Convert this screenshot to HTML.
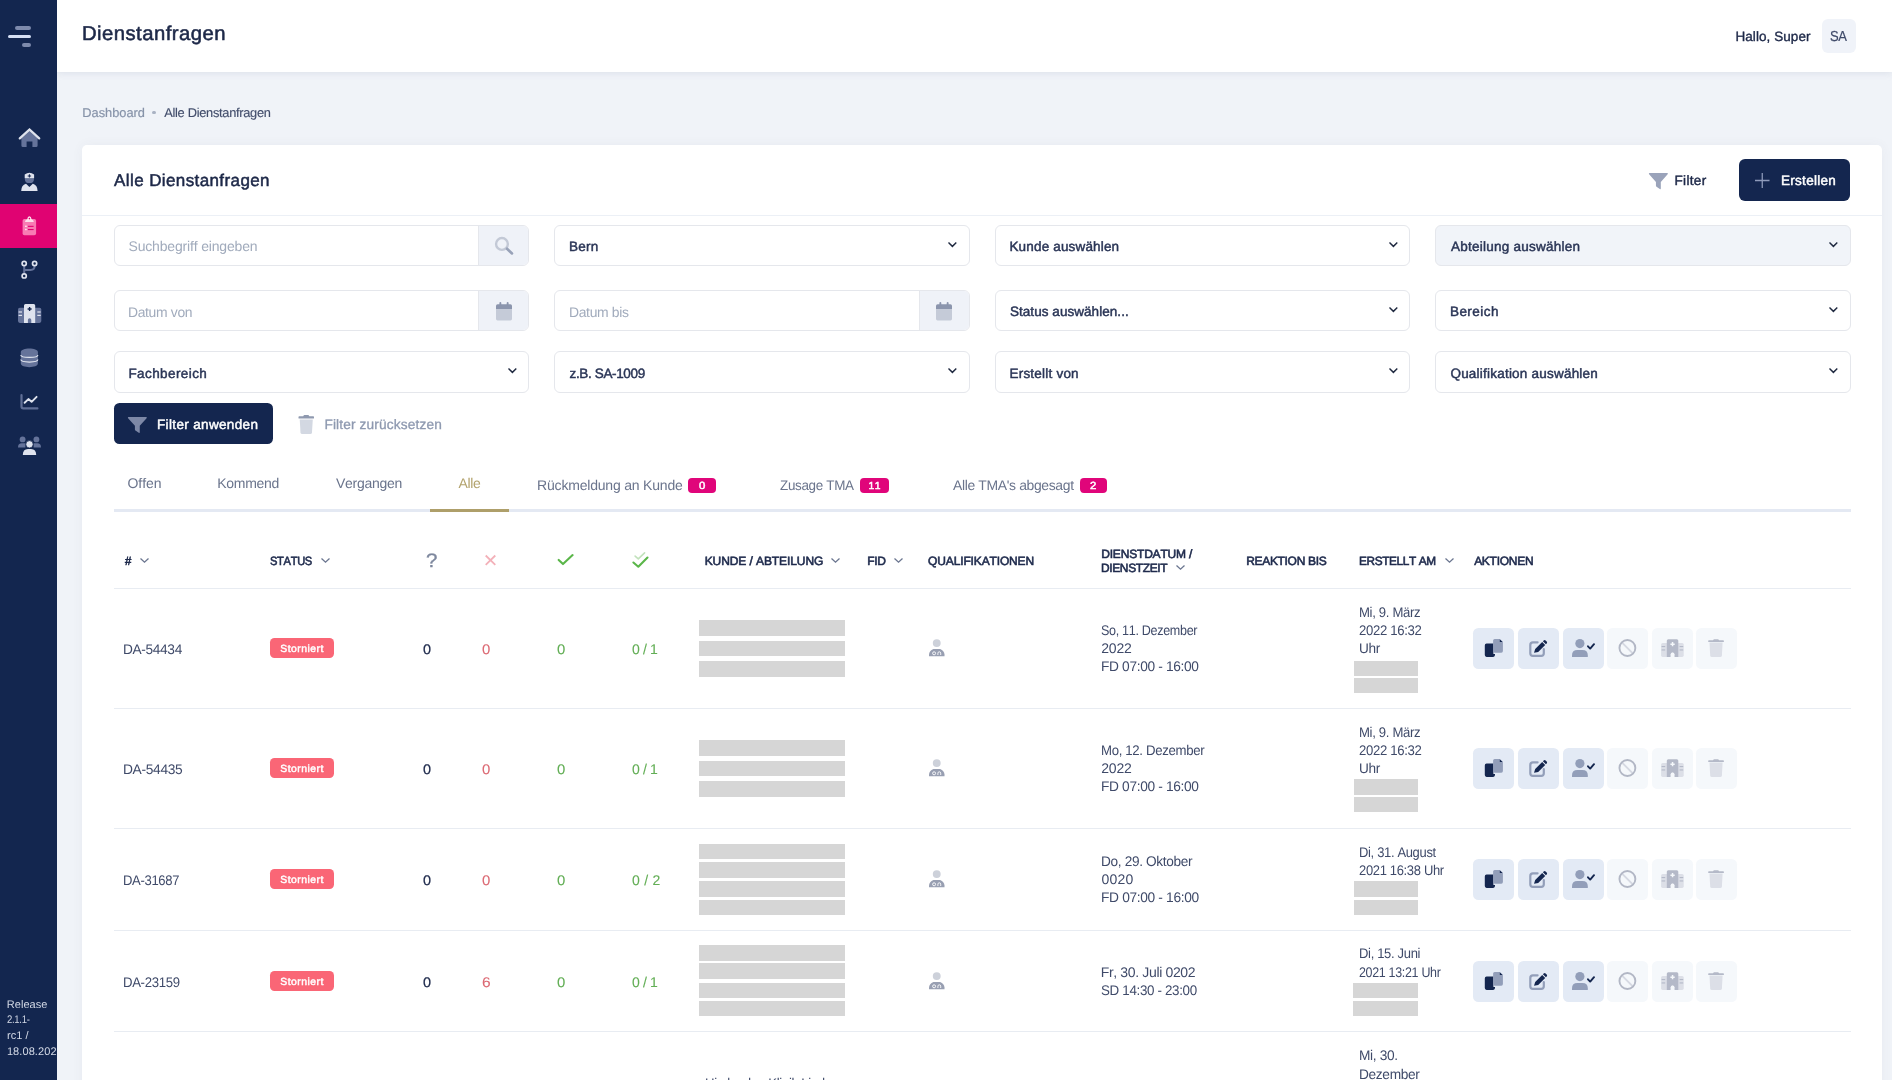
<!DOCTYPE html>
<html lang="de">
<head>
<meta charset="utf-8">
<title>Dienstanfragen</title>
<style>
*{box-sizing:border-box;margin:0;padding:0}
html,body{width:1892px;height:1080px;overflow:hidden}
body{position:relative;background:#f0f3f8;font-family:"Liberation Sans",sans-serif;color:#222c4e;font-size:14px;font-kerning:none}
.abs,.t{position:absolute}
.t{white-space:nowrap;line-height:20px;height:20px;transform-origin:0 50%;text-rendering:geometricPrecision}
#side,#head,#crumbs,#card{will-change:transform}
svg{display:block;overflow:visible}
#side{position:absolute;z-index:3;left:0;top:0;width:57px;height:1080px;background:#13264f;overflow:hidden}
#head{position:absolute;left:57px;top:0;width:1835px;height:72px;background:#fff;box-shadow:0 2px 6px rgba(190,197,212,.32)}
#card{position:absolute;left:82px;top:145px;width:1800px;height:960px;background:#fff;border-radius:5px 5px 0 0;box-shadow:0 0 12px rgba(70,76,100,.05)}
</style>
</head>
<body>
<nav id="side">
<div class="abs" style="left:14.90px;top:26.40px;width:16.30px;height:3.70px;background:#7d8aac;border-radius:2px;"></div>
<div class="abs" style="left:7.80px;top:34.80px;width:23.40px;height:3.60px;background:#d6e0f5;border-radius:2px;"></div>
<div class="abs" style="left:21.80px;top:42.90px;width:9.40px;height:3.80px;background:#7d8aac;border-radius:2px;"></div>
<svg class="abs" style="left:18.00px;top:127.00px;" width="23.00" height="21.00" viewBox="18 127 23 21" preserveAspectRatio="none"><path d="M21.4 138.2 L29.5 131.2 L37.6 138.2 V145.4 Q37.6 146.9 36.1 146.9 H32.4 V141.6 H26.6 V146.9 H22.9 Q21.4 146.9 21.4 145.4 Z" fill="#65739a"/><path d="M19.8 138.4 L29.5 129.6 L39.2 138.4" fill="none" stroke="#dfe3ee" stroke-width="2.3" stroke-linecap="round" stroke-linejoin="miter"/></svg>
<svg class="abs" style="left:20.00px;top:171.00px;" width="19.00" height="21.00" viewBox="20 171 19 21" preserveAspectRatio="none"><path d="M24.9 178.2 H33.9 V179.4 Q33.9 183 29.4 183 Q24.9 183 24.9 179.4 Z" fill="#65739a"/><path d="M24.7 178.3 V174.4 Q29.4 171.3 34.1 174.4 V178.3 Z" fill="#dfe3ee"/><path d="M28.9 175.4 V174.2 H29.9 V175.4 H31.1 V176.4 H29.9 V177.6 H28.9 V176.4 H27.7 V175.4 Z" fill="#14264f"/><path d="M21.2 191.1 Q21.2 185.2 26 183.8 L29.4 187 L32.8 183.8 Q37.6 185.2 37.6 191.1 Z" fill="#dfe3ee"/></svg>
<div class="abs" style="left:0.00px;top:204.00px;width:57.00px;height:44.00px;background:#e00372;"></div>
<svg class="abs" style="left:21.00px;top:215.00px;" width="17.00" height="22.00" viewBox="21 215 17 22" preserveAspectRatio="none"><rect x="22.6" y="219" width="13.5" height="16.2" rx="1.8" fill="#f87bb3"/><path d="M25 222 Q25 219.6 27.2 219.2 Q27.6 216.3 29.4 216.3 Q31.2 216.3 31.6 219.2 Q33.8 219.6 33.8 222 Z" fill="#fde0ec"/><circle cx="29.4" cy="218.6" r="0.8" fill="#e00372"/><rect x="25" y="225.6" width="1.8" height="1.4" fill="#fde0ec"/><rect x="28" y="225.8" width="5.6" height="1.1" fill="#e00372"/><rect x="25" y="228.8" width="1.8" height="1.4" fill="#fde0ec"/><rect x="28" y="229" width="5.6" height="1.1" fill="#e00372"/></svg>
<svg class="abs" style="left:20.00px;top:259.00px;" width="19.00" height="21.00" viewBox="20 259 19 21" preserveAspectRatio="none"><path d="M24.2 266 V273.4 M24.2 269.9 H30.6 Q34.6 269.9 34.6 266" fill="none" stroke="#65739a" stroke-width="2"/><circle cx="24.2" cy="263.5" r="2.1" fill="#14264f" stroke="#dfe3ee" stroke-width="1.7"/><circle cx="34.6" cy="263.5" r="2.1" fill="#14264f" stroke="#dfe3ee" stroke-width="1.7"/><circle cx="24.2" cy="275.9" r="2.1" fill="#14264f" stroke="#dfe3ee" stroke-width="1.7"/></svg>
<svg class="abs" style="left:18.00px;top:303.00px;" width="24.00" height="21.00" viewBox="18 303 24 21" preserveAspectRatio="none"><g opacity="1"><path d="M18 309.6 Q18 307.8 19.8 307.8 H39.5 Q41.3 307.8 41.3 309.6 V321.1 Q41.3 322.9 39.5 322.9 H19.8 Q18 322.9 18 321.1 Z" fill="#65739a"/><rect x="18.6" y="311.4" width="3.4" height="1.2" fill="#dfe3ee"/><rect x="18.6" y="314.8" width="3.4" height="1.2" fill="#dfe3ee"/><rect x="37.3" y="311.4" width="3.4" height="1.2" fill="#dfe3ee"/><rect x="37.3" y="314.8" width="3.4" height="1.2" fill="#dfe3ee"/><path d="M24 305.6 Q24 304.1 25.5 304.1 H33.7 Q35.2 304.1 35.2 305.6 V322.9 H31.3 V319.9 Q31.3 318.3 29.6 318.3 Q27.9 318.3 27.9 319.9 V322.9 H24 Z" fill="#dfe3ee"/><path d="M28.9 307 H30.3 V308.3 H31.6 V309.7 H30.3 V311 H28.9 V309.7 H27.6 V308.3 H28.9 Z" fill="#14264f"/></g></svg>
<svg class="abs" style="left:20.00px;top:347.00px;" width="19.00" height="21.00" viewBox="20 347 19 21" preserveAspectRatio="none"><path d="M20.8 351.9 V363.6 C20.8 368.3 37.9 368.3 37.9 363.6 V351.9 C37.9 347.2 20.8 347.2 20.8 351.9 Z" fill="#65739a"/><path d="M20.8 354.9 C20.8 358.2 37.9 358.2 37.9 354.9 M20.8 359.6 C20.8 362.9 37.9 362.9 37.9 359.6" fill="none" stroke="#dfe3ee" stroke-width="1.1"/></svg>
<svg class="abs" style="left:19.00px;top:393.00px;" width="21.00" height="18.00" viewBox="19 393 21 18" preserveAspectRatio="none"><path d="M21.5 395 V406.6 Q21.5 408.4 23.3 408.4 H37.4" fill="none" stroke="#5f6e96" stroke-width="2.2" stroke-linecap="round"/><path d="M24.6 402.8 L28.4 399.1 L31.6 401.8 L36.6 396.8" fill="none" stroke="#dfe3ee" stroke-width="1.9" stroke-linecap="round" stroke-linejoin="round"/></svg>
<svg class="abs" style="left:17.00px;top:435.00px;" width="25.00" height="21.00" viewBox="17 435 25 21" preserveAspectRatio="none"><circle cx="22.6" cy="439.4" r="2.9" fill="#65739a"/><circle cx="36.4" cy="439.4" r="2.9" fill="#65739a"/><path d="M18 447.4 Q18 443.3 21.8 443.3 H25.4 V447.4 Z" fill="#65739a"/><path d="M41 447.4 Q41 443.3 37.2 443.3 H33.6 V447.4 Z" fill="#65739a"/><circle cx="29.5" cy="444.3" r="3.7" fill="#dfe3ee" stroke="#14264f" stroke-width="0.8"/><path d="M22.8 455 Q22.8 449 28 449 H31 Q36.2 449 36.2 455 Z" fill="#dfe3ee"/></svg>
<div class="t" style="left:6.82px;top:995px;font-size:11px;color:#d3d9e6;letter-spacing:0.029px;">Release</div>
<div class="t" style="left:7.22px;top:1010px;font-size:11px;color:#d3d9e6;letter-spacing:-0.350px;transform:scaleX(0.8677);">2.1.1-</div>
<div class="t" style="left:6.99px;top:1026px;font-size:11px;color:#d3d9e6;letter-spacing:0.074px;">rc1 /</div>
<div class="t" style="left:6.88px;top:1042px;font-size:11px;color:#d3d9e6;letter-spacing:0.086px;">18.08.2022</div>
</nav>
<header id="head">
<div class="t" style="left:24.90px;top:22px;font-size:20px;color:#1d2848;letter-spacing:0.450px;transform:scaleX(1.0136);-webkit-text-stroke:0.55px #1d2848;line-height:24px;height:24px;">Dienstanfragen</div>
<div class="t" style="left:1678.46px;top:27px;font-size:13.5px;color:#1d2848;letter-spacing:0.066px;-webkit-text-stroke:0.36px #1d2848;">Hallo, Super</div>
<div class="abs" style="left:1764.80px;top:18.80px;width:34.40px;height:34.20px;background:#f0f3f9;border-radius:6px;"></div>
<div class="t" style="left:1773.39px;top:27px;font-size:14.5px;color:#3f4a69;letter-spacing:-0.350px;transform:scaleX(0.8978);-webkit-text-stroke:0.2px #3f4a69;">SA</div>
</header>
<div id="crumbs">
<div class="t" style="left:82.36px;top:103px;font-size:12.8px;color:#8793a9;letter-spacing:-0.009px;-webkit-text-stroke:0.2px #8793a9;">Dashboard</div>
<div class="abs" style="left:152.00px;top:110.75px;width:3.50px;height:3.50px;background:#a9b2c3;border-radius:2px;"></div>
<div class="t" style="left:164.21px;top:103px;font-size:12.8px;color:#434e6c;letter-spacing:-0.278px;-webkit-text-stroke:0.15px #434e6c;">Alle Dienstanfragen</div>
</div>
<main id="card">
<div class="t" style="left:32.10px;top:26px;font-size:17px;color:#1d2848;letter-spacing:0.393px;-webkit-text-stroke:0.5px #1d2848;">Alle Dienstanfragen</div>
<div class="abs" style="left:0.00px;top:69.50px;width:1800.00px;height:1.50px;background:#ecf0f6;"></div>
<svg class="abs" style="left:1567.00px;top:27.50px;" width="18.75" height="16.25" viewBox="0 0 20 17" preserveAspectRatio="none"><path d="M0.4 0 H19.6 Q20.6 0.3 19.9 1.2 L12.6 9.4 V16.2 Q12.5 17.3 11.5 16.7 L8 14.4 Q7.4 14 7.4 13.2 V9.4 L0.1 1.2 Q-0.6 0.3 0.4 0 Z" fill="#9aa3ba"/></svg>
<div class="t" style="left:1592.50px;top:26px;font-size:13.5px;color:#1d2848;letter-spacing:0.338px;-webkit-text-stroke:0.46px #1d2848;">Filter</div>
<div class="abs" style="left:1657.40px;top:14.00px;width:111.10px;height:41.50px;background:#14264f;border-radius:6px;"></div>
<svg class="abs" style="left:1673.00px;top:28.00px;" width="14.50" height="15.00" viewBox="0 0 15 15" preserveAspectRatio="none"><path d="M7.5 0 V15 M0 7.5 H15" stroke="#8f9bbb" stroke-width="1.3" fill="none"/></svg>
<div class="t" style="left:1699.00px;top:26px;font-size:13.5px;color:#fff;letter-spacing:0.289px;-webkit-text-stroke:0.46px #fff;">Erstellen</div>
<div class="abs fld" style="left:31.75px;top:80.30px;width:415.25px;height:41.00px;background:#fff;border-radius:6px;border:1px solid #e5e7ec;"></div>
<div class="t" style="left:46.52px;top:91px;font-size:14px;color:#a1abbc;letter-spacing:-0.173px;">Suchbegriff eingeben</div>
<div class="abs" style="left:396.00px;top:81.30px;width:50.00px;height:39.00px;background:#eff2f8;border-left:1px solid #e5e7ec;border-radius:0 5px 5px 0;"></div>
<svg class="abs" style="left:412.50px;top:92.00px;" width="18.50" height="17.50" viewBox="0 0 18.5 17.5" preserveAspectRatio="none"><circle cx="6.95" cy="6.95" r="5.9" fill="none" stroke="#c3c9d6" stroke-width="2.4"/><path d="M12 11.8 L17 16.4" stroke="#98a2b8" stroke-width="2.7" stroke-linecap="round"/></svg>
<div class="abs fld" style="left:472.25px;top:80.30px;width:415.25px;height:41.00px;background:#fff;border-radius:6px;border:1px solid #e5e7ec;"></div>
<div class="t" style="left:486.95px;top:92px;font-size:13.5px;color:#2a3556;letter-spacing:0.290px;-webkit-text-stroke:0.46px #2a3556;">Bern</div>
<svg class="abs" style="left:866.20px;top:96.90px;" width="8.80" height="5.20" viewBox="0 0 9 5" preserveAspectRatio="none"><path d="M0.5 0.5 L4.5 4.2 L8.5 0.5" stroke="#1f2940" stroke-width="1.45" fill="none" stroke-linecap="butt" stroke-linejoin="miter"/></svg>
<div class="abs fld" style="left:912.75px;top:80.30px;width:415.25px;height:41.00px;background:#fff;border-radius:6px;border:1px solid #e5e7ec;"></div>
<div class="t" style="left:927.45px;top:92px;font-size:13.5px;color:#2a3556;letter-spacing:0.168px;-webkit-text-stroke:0.46px #2a3556;">Kunde auswählen</div>
<svg class="abs" style="left:1306.70px;top:96.90px;" width="8.80" height="5.20" viewBox="0 0 9 5" preserveAspectRatio="none"><path d="M0.5 0.5 L4.5 4.2 L8.5 0.5" stroke="#1f2940" stroke-width="1.45" fill="none" stroke-linecap="butt" stroke-linejoin="miter"/></svg>
<div class="abs fld" style="left:1353.25px;top:80.30px;width:415.25px;height:41.00px;background:#f1f4f9;border-radius:6px;border:1px solid #e5e7ec;"></div>
<div class="t" style="left:1369.03px;top:92px;font-size:13.5px;color:#2a3556;letter-spacing:0.248px;-webkit-text-stroke:0.46px #2a3556;">Abteilung auswählen</div>
<svg class="abs" style="left:1747.20px;top:96.90px;" width="8.80" height="5.20" viewBox="0 0 9 5" preserveAspectRatio="none"><path d="M0.5 0.5 L4.5 4.2 L8.5 0.5" stroke="#1f2940" stroke-width="1.45" fill="none" stroke-linecap="butt" stroke-linejoin="miter"/></svg>
<div class="abs fld" style="left:31.75px;top:145.30px;width:415.25px;height:41.00px;background:#fff;border-radius:6px;border:1px solid #e5e7ec;"></div>
<div class="t" style="left:46.04px;top:157px;font-size:14px;color:#a1abbc;letter-spacing:-0.350px;transform:scaleX(0.9941);">Datum von</div>
<div class="abs" style="left:396.00px;top:146.30px;width:50.00px;height:39.00px;background:#eff2f8;border-left:1px solid #e5e7ec;border-radius:0 5px 5px 0;"></div>
<svg class="abs" style="left:413.50px;top:156.50px;" width="16.00" height="18.50" viewBox="0 0 16 18.5" preserveAspectRatio="none"><rect x="0" y="5.4" width="16" height="13" rx="1.6" fill="#c5cbd8"/><path d="M0 7 V3.8 Q0 2.2 1.6 2.2 H14.4 Q16 2.2 16 3.8 V7 Z" fill="#8b95ad"/><rect x="3.4" y="0" width="1.9" height="4" rx="0.9" fill="#8b95ad"/><rect x="10.7" y="0" width="1.9" height="4" rx="0.9" fill="#8b95ad"/></svg>
<div class="abs fld" style="left:472.25px;top:145.30px;width:415.25px;height:41.00px;background:#fff;border-radius:6px;border:1px solid #e5e7ec;"></div>
<div class="t" style="left:486.54px;top:157px;font-size:14px;color:#a1abbc;letter-spacing:-0.350px;transform:scaleX(0.9947);">Datum bis</div>
<div class="abs" style="left:836.50px;top:146.30px;width:50.00px;height:39.00px;background:#eff2f8;border-left:1px solid #e5e7ec;border-radius:0 5px 5px 0;"></div>
<svg class="abs" style="left:854.00px;top:156.50px;" width="16.00" height="18.50" viewBox="0 0 16 18.5" preserveAspectRatio="none"><rect x="0" y="5.4" width="16" height="13" rx="1.6" fill="#c5cbd8"/><path d="M0 7 V3.8 Q0 2.2 1.6 2.2 H14.4 Q16 2.2 16 3.8 V7 Z" fill="#8b95ad"/><rect x="3.4" y="0" width="1.9" height="4" rx="0.9" fill="#8b95ad"/><rect x="10.7" y="0" width="1.9" height="4" rx="0.9" fill="#8b95ad"/></svg>
<div class="abs fld" style="left:912.75px;top:145.30px;width:415.25px;height:41.00px;background:#fff;border-radius:6px;border:1px solid #e5e7ec;"></div>
<div class="t" style="left:927.93px;top:157px;font-size:13.5px;color:#2a3556;letter-spacing:0.053px;-webkit-text-stroke:0.46px #2a3556;">Status auswählen...</div>
<svg class="abs" style="left:1306.70px;top:161.90px;" width="8.80" height="5.20" viewBox="0 0 9 5" preserveAspectRatio="none"><path d="M0.5 0.5 L4.5 4.2 L8.5 0.5" stroke="#1f2940" stroke-width="1.45" fill="none" stroke-linecap="butt" stroke-linejoin="miter"/></svg>
<div class="abs fld" style="left:1353.25px;top:145.30px;width:415.25px;height:41.00px;background:#fff;border-radius:6px;border:1px solid #e5e7ec;"></div>
<div class="t" style="left:1367.95px;top:157px;font-size:13.5px;color:#2a3556;letter-spacing:0.450px;-webkit-text-stroke:0.46px #2a3556;">Bereich</div>
<svg class="abs" style="left:1747.20px;top:161.90px;" width="8.80" height="5.20" viewBox="0 0 9 5" preserveAspectRatio="none"><path d="M0.5 0.5 L4.5 4.2 L8.5 0.5" stroke="#1f2940" stroke-width="1.45" fill="none" stroke-linecap="butt" stroke-linejoin="miter"/></svg>
<div class="abs fld" style="left:31.75px;top:206.20px;width:415.25px;height:41.70px;background:#fff;border-radius:6px;border:1px solid #e5e7ec;"></div>
<div class="t" style="left:46.45px;top:219px;font-size:13.5px;color:#2a3556;letter-spacing:0.410px;-webkit-text-stroke:0.46px #2a3556;">Fachbereich</div>
<svg class="abs" style="left:425.70px;top:222.80px;" width="8.80" height="5.20" viewBox="0 0 9 5" preserveAspectRatio="none"><path d="M0.5 0.5 L4.5 4.2 L8.5 0.5" stroke="#1f2940" stroke-width="1.45" fill="none" stroke-linecap="butt" stroke-linejoin="miter"/></svg>
<div class="abs fld" style="left:472.25px;top:206.20px;width:415.25px;height:41.70px;background:#fff;border-radius:6px;border:1px solid #e5e7ec;"></div>
<div class="t" style="left:487.49px;top:219px;font-size:13.5px;color:#2a3556;letter-spacing:-0.350px;-webkit-text-stroke:0.46px #2a3556;">z.B. SA-1009</div>
<svg class="abs" style="left:866.20px;top:222.80px;" width="8.80" height="5.20" viewBox="0 0 9 5" preserveAspectRatio="none"><path d="M0.5 0.5 L4.5 4.2 L8.5 0.5" stroke="#1f2940" stroke-width="1.45" fill="none" stroke-linecap="butt" stroke-linejoin="miter"/></svg>
<div class="abs fld" style="left:912.75px;top:206.20px;width:415.25px;height:41.70px;background:#fff;border-radius:6px;border:1px solid #e5e7ec;"></div>
<div class="t" style="left:927.45px;top:219px;font-size:13.5px;color:#2a3556;letter-spacing:0.219px;-webkit-text-stroke:0.46px #2a3556;">Erstellt von</div>
<svg class="abs" style="left:1306.70px;top:222.80px;" width="8.80" height="5.20" viewBox="0 0 9 5" preserveAspectRatio="none"><path d="M0.5 0.5 L4.5 4.2 L8.5 0.5" stroke="#1f2940" stroke-width="1.45" fill="none" stroke-linecap="butt" stroke-linejoin="miter"/></svg>
<div class="abs fld" style="left:1353.25px;top:206.20px;width:415.25px;height:41.70px;background:#fff;border-radius:6px;border:1px solid #e5e7ec;"></div>
<div class="t" style="left:1368.43px;top:219px;font-size:13.5px;color:#2a3556;letter-spacing:0.219px;-webkit-text-stroke:0.46px #2a3556;">Qualifikation auswählen</div>
<svg class="abs" style="left:1747.20px;top:222.80px;" width="8.80" height="5.20" viewBox="0 0 9 5" preserveAspectRatio="none"><path d="M0.5 0.5 L4.5 4.2 L8.5 0.5" stroke="#1f2940" stroke-width="1.45" fill="none" stroke-linecap="butt" stroke-linejoin="miter"/></svg>
<div class="abs" style="left:31.75px;top:258.00px;width:159.00px;height:40.75px;background:#14264f;border-radius:5.5px;"></div>
<svg class="abs" style="left:46.30px;top:271.70px;" width="18.70" height="16.00" viewBox="0 0 20 17" preserveAspectRatio="none"><path d="M0.4 0 H19.6 Q20.6 0.3 19.9 1.2 L12.6 9.4 V16.2 Q12.5 17.3 11.5 16.7 L8 14.4 Q7.4 14 7.4 13.2 V9.4 L0.1 1.2 Q-0.6 0.3 0.4 0 Z" fill="#7d88a7"/></svg>
<div class="t" style="left:75.00px;top:270px;font-size:13.5px;color:#fff;letter-spacing:0.348px;-webkit-text-stroke:0.46px #fff;">Filter anwenden</div>
<svg class="abs" style="left:215.50px;top:270.00px;" width="16.50" height="19.00" viewBox="0 0 16.5 19" preserveAspectRatio="none"><path d="M0.5 1.9 Q0.5 1.3 1.2 1.3 H5.2 L5.8 0.3 Q6 0 6.4 0 H10.1 Q10.5 0 10.7 0.3 L11.3 1.3 H15.3 Q16 1.3 16 1.9 V2.9 Q16 3.4 15.4 3.4 H1.1 Q0.5 3.4 0.5 2.9 Z" fill="#8f99af"/><path d="M1.7 4.4 H14.8 L14 17.4 Q13.9 19 12.3 19 H4.2 Q2.6 19 2.5 17.4 Z" fill="#d3d8e2"/></svg>
<div class="t" style="left:242.42px;top:270px;font-size:13.7px;color:#8e99b0;letter-spacing:0.140px;-webkit-text-stroke:0.3px #8e99b0;">Filter zurücksetzen</div>
<div class="t" style="left:45.52px;top:328px;font-size:14px;color:#6a748c;letter-spacing:-0.051px;">Offen</div>
<div class="t" style="left:135.28px;top:328px;font-size:14px;color:#6a748c;letter-spacing:-0.297px;">Kommend</div>
<div class="t" style="left:253.90px;top:328px;font-size:14px;color:#6a748c;letter-spacing:-0.262px;">Vergangen</div>
<div class="t" style="left:376.40px;top:328px;font-size:14px;color:#b3a36d;letter-spacing:-0.323px;">Alle</div>
<div class="t" style="left:455.08px;top:330px;font-size:14px;color:#6a748c;letter-spacing:-0.197px;">Rückmeldung an Kunde</div>
<div class="abs" style="left:606.45px;top:332.50px;width:27.35px;height:15.80px;background:#e0057a;border-radius:4px;"></div>
<div class="t" style="left:617.08px;top:332px;font-size:10.3px;color:#fff;transform:scaleX(1.1001);-webkit-text-stroke:0.5px #fff;">0</div>
<div class="t" style="left:697.50px;top:330px;font-size:14px;color:#6a748c;letter-spacing:-0.350px;transform:scaleX(0.9609);">Zusage TMA</div>
<div class="abs" style="left:778.20px;top:332.50px;width:28.60px;height:15.80px;background:#e0057a;border-radius:4px;"></div>
<div class="t" style="left:786.47px;top:332px;font-size:10.3px;color:#fff;letter-spacing:0.500px;-webkit-text-stroke:0.5px #fff;">11</div>
<div class="t" style="left:870.70px;top:330px;font-size:14px;color:#6a748c;letter-spacing:-0.350px;transform:scaleX(0.9949);">Alle TMA&#x27;s abgesagt</div>
<div class="abs" style="left:998.20px;top:332.50px;width:26.60px;height:15.80px;background:#e0057a;border-radius:4px;"></div>
<div class="t" style="left:1008.41px;top:332px;font-size:10.3px;color:#fff;transform:scaleX(1.1055);-webkit-text-stroke:0.5px #fff;">2</div>
<div class="abs" style="left:31.75px;top:364.00px;width:1736.75px;height:3.00px;background:#e4e9f3;"></div>
<div class="abs" style="left:348.00px;top:364.00px;width:79.00px;height:3.00px;background:#ae9f6a;"></div>
<div class="t" style="left:42.64px;top:406px;font-size:12px;color:#1e2a4c;transform:scaleX(0.9489);-webkit-text-stroke:0.6px #1e2a4c;">#</div>
<svg class="abs" style="left:58.00px;top:413.00px;" width="9.00" height="5.00" viewBox="0 0 9 5" preserveAspectRatio="none"><path d="M0.5 0.5 L4.5 4.2 L8.5 0.5" stroke="#6b7690" stroke-width="1.3" fill="none" stroke-linecap="butt" stroke-linejoin="miter"/></svg>
<div class="t" style="left:188.14px;top:406px;font-size:12px;color:#1e2a4c;letter-spacing:-0.350px;transform:scaleX(0.9276);-webkit-text-stroke:0.6px #1e2a4c;">STATUS</div>
<svg class="abs" style="left:238.50px;top:413.00px;" width="9.00" height="5.00" viewBox="0 0 9 5" preserveAspectRatio="none"><path d="M0.5 0.5 L4.5 4.2 L8.5 0.5" stroke="#6b7690" stroke-width="1.3" fill="none" stroke-linecap="butt" stroke-linejoin="miter"/></svg>
<div class="t" style="left:344.32px;top:406px;font-size:19.5px;color:#7d879d;transform:scaleX(1.0491);-webkit-text-stroke:0.35px #7d879d;">?</div>
<svg class="abs" style="left:403.00px;top:410.00px;" width="11.00" height="10.50" viewBox="0 0 11 10.5" preserveAspectRatio="none"><path d="M0.7 0.5 L10.3 9.8 M10.3 0.5 L0.7 9.8" stroke="#f3b1b9" stroke-width="1.8" fill="none"/></svg>
<svg class="abs" style="left:475.00px;top:408.00px;" width="17.00" height="13.50" viewBox="0 0 17 13.5" preserveAspectRatio="none"><path d="M1.7 6.9 L6 11.1 L15.6 2.1" stroke="#5ab649" stroke-width="2.1" fill="none" stroke-linecap="round" stroke-linejoin="round"/></svg>
<svg class="abs" style="left:550.00px;top:407.00px;" width="17.00" height="16.00" viewBox="0 0 17 16" preserveAspectRatio="none"><path d="M3.1 4.1 L6.3 6.9 L12.6 0.9" stroke="#c2e2bc" stroke-width="1.6" fill="none" stroke-linecap="round" stroke-linejoin="round"/><path d="M1.4 10.5 L6.3 14.7 L15.5 5.5" stroke="#5ab649" stroke-width="2.1" fill="none" stroke-linecap="round" stroke-linejoin="round"/></svg>
<div class="t" style="left:622.68px;top:406px;font-size:12px;color:#1e2a4c;letter-spacing:-0.086px;-webkit-text-stroke:0.6px #1e2a4c;">KUNDE / ABTEILUNG</div>
<svg class="abs" style="left:748.70px;top:413.00px;" width="9.00" height="5.00" viewBox="0 0 9 5" preserveAspectRatio="none"><path d="M0.5 0.5 L4.5 4.2 L8.5 0.5" stroke="#6b7690" stroke-width="1.3" fill="none" stroke-linecap="butt" stroke-linejoin="miter"/></svg>
<div class="t" style="left:785.18px;top:406px;font-size:12px;color:#1e2a4c;letter-spacing:-0.242px;-webkit-text-stroke:0.6px #1e2a4c;">FID</div>
<svg class="abs" style="left:812.00px;top:413.00px;" width="9.00" height="5.00" viewBox="0 0 9 5" preserveAspectRatio="none"><path d="M0.5 0.5 L4.5 4.2 L8.5 0.5" stroke="#6b7690" stroke-width="1.3" fill="none" stroke-linecap="butt" stroke-linejoin="miter"/></svg>
<div class="t" style="left:846.10px;top:406px;font-size:12px;color:#1e2a4c;letter-spacing:-0.142px;-webkit-text-stroke:0.6px #1e2a4c;">QUALIFIKATIONEN</div>
<div class="t" style="left:1019.18px;top:399px;font-size:12px;color:#1e2a4c;letter-spacing:-0.174px;-webkit-text-stroke:0.6px #1e2a4c;">DIENSTDATUM /</div>
<div class="t" style="left:1019.18px;top:413px;font-size:12px;color:#1e2a4c;letter-spacing:-0.350px;transform:scaleX(0.9951);-webkit-text-stroke:0.6px #1e2a4c;">DIENSTZEIT</div>
<svg class="abs" style="left:1094.30px;top:419.50px;" width="9.00" height="5.00" viewBox="0 0 9 5" preserveAspectRatio="none"><path d="M0.5 0.5 L4.5 4.2 L8.5 0.5" stroke="#6b7690" stroke-width="1.3" fill="none" stroke-linecap="butt" stroke-linejoin="miter"/></svg>
<div class="t" style="left:1164.18px;top:406px;font-size:12px;color:#1e2a4c;letter-spacing:-0.317px;-webkit-text-stroke:0.6px #1e2a4c;">REAKTION BIS</div>
<div class="t" style="left:1277.20px;top:406px;font-size:12px;color:#1e2a4c;letter-spacing:-0.350px;transform:scaleX(0.9830);-webkit-text-stroke:0.6px #1e2a4c;">ERSTELLT AM</div>
<svg class="abs" style="left:1362.50px;top:413.00px;" width="9.00" height="5.00" viewBox="0 0 9 5" preserveAspectRatio="none"><path d="M0.5 0.5 L4.5 4.2 L8.5 0.5" stroke="#6b7690" stroke-width="1.3" fill="none" stroke-linecap="butt" stroke-linejoin="miter"/></svg>
<div class="t" style="left:1392.14px;top:406px;font-size:12px;color:#1e2a4c;letter-spacing:-0.264px;-webkit-text-stroke:0.6px #1e2a4c;">AKTIONEN</div>
<div class="abs" style="left:31.75px;top:442.70px;width:1736.75px;height:1.20px;background:#e8ecf2;"></div>
<div class="t" style="left:41.30px;top:494px;font-size:14px;color:#3f4a69;letter-spacing:-0.350px;transform:scaleX(0.9779);">DA-54434</div>
<div class="abs" style="left:187.60px;top:493.40px;width:64.70px;height:20.00px;background:#fa6676;border-radius:4.5px;"></div>
<div class="t" style="left:198.31px;top:495px;font-size:10.4px;color:#fff;letter-spacing:0.466px;-webkit-text-stroke:0.45px #fff;">Storniert</div>
<div class="t" style="left:341.39px;top:494px;font-size:14px;color:#1e2a4c;transform:scaleX(1.0309);-webkit-text-stroke:0.25px #1e2a4c;">0</div>
<div class="t" style="left:399.92px;top:494px;font-size:14px;color:#dc6a74;transform:scaleX(1.0633);-webkit-text-stroke:0.1px #dc6a74;">0</div>
<div class="t" style="left:474.92px;top:494px;font-size:14px;color:#62ae55;transform:scaleX(1.0633);-webkit-text-stroke:0.1px #62ae55;">0</div>
<div class="t" style="left:549.95px;top:494px;font-size:14px;color:#62ae55;letter-spacing:-0.346px;-webkit-text-stroke:0.1px #62ae55;">0 / 1</div>
<div class="abs" style="left:616.75px;top:475.00px;width:145.95px;height:15.50px;background:#d6d6d6;"></div>
<div class="abs" style="left:616.75px;top:495.50px;width:145.95px;height:15.50px;background:#d6d6d6;"></div>
<div class="abs" style="left:616.75px;top:516.25px;width:145.95px;height:15.25px;background:#d6d6d6;"></div>
<svg class="abs" style="left:847.00px;top:494.00px;" width="15.50" height="17.50" viewBox="0 0 15.5 17.5" preserveAspectRatio="none"><circle cx="7.75" cy="4.1" r="3.95" fill="#cdd1da"/><path d="M0 17.2 V15.6 Q0.3 11.4 4.4 9.9 H11.1 Q15.2 11.4 15.5 15.6 V17.2 Z" fill="#989fb2"/><circle cx="5.1" cy="14.3" r="1.5" fill="none" stroke="#fff" stroke-width="0.9"/><path d="M8.9 16 V14.2 Q8.9 12.8 10.3 12.8 Q11.7 12.8 11.7 14.2 V16" fill="none" stroke="#fff" stroke-width="0.9"/></svg>
<div class="t" style="left:1019.33px;top:475px;font-size:14px;color:#3f4a69;letter-spacing:-0.350px;transform:scaleX(0.8972);">So, 11. Dezember</div>
<div class="t" style="left:1019.20px;top:493px;font-size:14px;color:#3f4a69;letter-spacing:-0.166px;">2022</div>
<div class="t" style="left:1018.80px;top:511px;font-size:14px;color:#3f4a69;letter-spacing:-0.350px;transform:scaleX(0.9808);">FD 07:00 - 16:00</div>
<div class="t" style="left:1276.85px;top:457px;font-size:14px;color:#3f4a69;letter-spacing:-0.350px;transform:scaleX(0.9386);">Mi, 9. März</div>
<div class="t" style="left:1277.24px;top:475px;font-size:14px;color:#3f4a69;letter-spacing:-0.350px;transform:scaleX(0.9386);">2022 16:32</div>
<div class="t" style="left:1276.88px;top:493px;font-size:14px;color:#3f4a69;letter-spacing:-0.350px;transform:scaleX(0.9720);">Uhr</div>
<div class="abs" style="left:1272.00px;top:516.00px;width:64.40px;height:15.00px;background:#d6d6d6;"></div>
<div class="abs" style="left:1272.00px;top:533.00px;width:64.40px;height:15.00px;background:#d6d6d6;"></div>
<div class="abs" style="left:1391.00px;top:483.00px;width:41.00px;height:41.00px;background:#e3eaf5;border-radius:5.5px;"></div>
<div class="abs" style="left:1436.00px;top:483.00px;width:41.00px;height:41.00px;background:#e3eaf5;border-radius:5.5px;"></div>
<div class="abs" style="left:1480.50px;top:483.00px;width:41.00px;height:41.00px;background:#e3eaf5;border-radius:5.5px;"></div>
<div class="abs" style="left:1525.00px;top:483.00px;width:41.00px;height:41.00px;background:#f5f8fb;border-radius:5.5px;"></div>
<div class="abs" style="left:1569.50px;top:483.00px;width:41.00px;height:41.00px;background:#f5f8fb;border-radius:5.5px;"></div>
<div class="abs" style="left:1614.30px;top:483.00px;width:41.00px;height:41.00px;background:#f5f8fb;border-radius:5.5px;"></div>
<svg class="abs" style="left:1391.00px;top:483.00px;" width="41.00" height="41.00" viewBox="0 0 41 41" preserveAspectRatio="none"><path d="M11.8 17.4 Q11.8 15.6 13.6 15.6 H20.4 V26 H22 V27.1 Q22 28.9 20.2 28.9 H13.6 Q11.8 28.9 11.8 27.1 Z" fill="#14264f"/><path d="M20.1 12.6 Q20.1 11 21.7 11 H26.6 L29.9 14.3 V23.1 Q29.9 24.7 28.3 24.7 H21.7 Q20.1 24.7 20.1 23.1 Z" fill="#929eb9"/><path d="M26.8 11.2 L29.7 14.1 H26.8 Z" fill="#14264f"/></svg>
<svg class="abs" style="left:1436.00px;top:483.00px;" width="41.00" height="41.00" viewBox="0 0 41 41" preserveAspectRatio="none"><path d="M19.6 14.3 H14.9 Q12.3 14.3 12.3 16.9 V25.2 Q12.3 27.8 14.9 27.8 H23.2 Q25.8 27.8 25.8 25.2 V21" fill="none" stroke="#929eb9" stroke-width="2.2" stroke-linecap="round"/><path d="M16 24.7 L17.2 20.9 L24.2 13.9 L27.2 16.9 L20.2 23.9 Z" fill="#14264f"/><path d="M24.9 13.2 L25.7 12.4 Q26.6 11.5 27.6 12.4 L28.7 13.5 Q29.6 14.5 28.7 15.4 L27.9 16.2 Z" fill="#14264f"/></svg>
<svg class="abs" style="left:1480.50px;top:483.00px;" width="41.00" height="41.00" viewBox="0 0 41 41" preserveAspectRatio="none"><circle cx="16.9" cy="15.6" r="4.6" fill="#929eb9"/><path d="M9 28.9 V27.2 Q9 21.9 14.4 21.9 H19.4 Q24.8 21.9 24.8 27.2 V28.9 Z" fill="#929eb9"/><path d="M25 18.3 L27.2 20.6 L31 16.2" fill="none" stroke="#14264f" stroke-width="1.9" stroke-linecap="round" stroke-linejoin="round"/></svg>
<svg class="abs" style="left:1525.00px;top:483.00px;" width="41.00" height="41.00" viewBox="0 0 41 41" preserveAspectRatio="none"><path d="M14.8 14.4 L26 25.6" stroke="#d5d9e2" stroke-width="1.9"/><circle cx="20.4" cy="20" r="7.95" fill="none" stroke="#b2b7c5" stroke-width="1.9"/></svg>
<svg class="abs" style="left:1569.50px;top:483.00px;" width="41.00" height="41.00" viewBox="0 0 41 41" preserveAspectRatio="none"><rect x="9.1" y="14.9" width="22.6" height="14" rx="1.6" fill="#dcdfe7"/><rect x="9.6" y="18" width="3.6" height="1.1" fill="#b4b9c8"/><rect x="9.6" y="21.4" width="3.6" height="1.1" fill="#b4b9c8"/><rect x="27.6" y="18" width="3.6" height="1.1" fill="#b4b9c8"/><rect x="27.6" y="21.4" width="3.6" height="1.1" fill="#b4b9c8"/><path d="M14.8 12.7 Q14.8 11.2 16.3 11.2 H24.8 Q26.3 11.2 26.3 12.7 V28.9 H22.4 V26.2 Q22.4 24.6 20.55 24.6 Q18.7 24.6 18.7 26.2 V28.9 H14.8 Z" fill="#b4b9c8"/><path d="M19.8 14 H21.3 V15.4 H22.7 V16.9 H21.3 V18.3 H19.8 V16.9 H18.4 V15.4 H19.8 Z" fill="#f5f8fb"/><path d="M18.7 29.2 V26.2 Q18.7 24.6 20.55 24.6 Q22.4 24.6 22.4 26.2 V29.2 Z" fill="#f5f8fb"/></svg>
<svg class="abs" style="left:1614.30px;top:483.00px;" width="41.00" height="41.00" viewBox="0 0 41 41" preserveAspectRatio="none"><path d="M12.2 12.9 Q12.2 12.3 12.9 12.3 H17 L17.6 11.5 Q17.8 11.2 18.2 11.2 H21.9 Q22.3 11.2 22.5 11.5 L23.1 12.3 H27.2 Q27.9 12.3 27.9 12.9 V13.6 Q27.9 14.1 27.3 14.1 H12.8 Q12.2 14.1 12.2 13.6 Z" fill="#b4b9c8"/><path d="M13.5 14.6 H26.6 L25.9 27.4 Q25.8 28.9 24.3 28.9 H15.8 Q14.3 28.9 14.2 27.4 Z" fill="#dcdfe7"/></svg>
<div class="abs" style="left:31.75px;top:562.80px;width:1736.75px;height:1.20px;background:#e8ecf2;"></div>
<div class="t" style="left:41.30px;top:614px;font-size:14px;color:#3f4a69;letter-spacing:-0.350px;transform:scaleX(0.9856);">DA-54435</div>
<div class="abs" style="left:187.60px;top:613.40px;width:64.70px;height:20.00px;background:#fa6676;border-radius:4.5px;"></div>
<div class="t" style="left:198.31px;top:615px;font-size:10.4px;color:#fff;letter-spacing:0.466px;-webkit-text-stroke:0.45px #fff;">Storniert</div>
<div class="t" style="left:341.39px;top:614px;font-size:14px;color:#1e2a4c;transform:scaleX(1.0309);-webkit-text-stroke:0.25px #1e2a4c;">0</div>
<div class="t" style="left:399.92px;top:614px;font-size:14px;color:#dc6a74;transform:scaleX(1.0633);-webkit-text-stroke:0.1px #dc6a74;">0</div>
<div class="t" style="left:474.92px;top:614px;font-size:14px;color:#62ae55;transform:scaleX(1.0633);-webkit-text-stroke:0.1px #62ae55;">0</div>
<div class="t" style="left:549.95px;top:614px;font-size:14px;color:#62ae55;letter-spacing:-0.346px;-webkit-text-stroke:0.1px #62ae55;">0 / 1</div>
<div class="abs" style="left:616.75px;top:595.00px;width:145.95px;height:15.50px;background:#d6d6d6;"></div>
<div class="abs" style="left:616.75px;top:615.50px;width:145.95px;height:15.50px;background:#d6d6d6;"></div>
<div class="abs" style="left:616.75px;top:636.25px;width:145.95px;height:15.25px;background:#d6d6d6;"></div>
<svg class="abs" style="left:847.00px;top:614.00px;" width="15.50" height="17.50" viewBox="0 0 15.5 17.5" preserveAspectRatio="none"><circle cx="7.75" cy="4.1" r="3.95" fill="#cdd1da"/><path d="M0 17.2 V15.6 Q0.3 11.4 4.4 9.9 H11.1 Q15.2 11.4 15.5 15.6 V17.2 Z" fill="#989fb2"/><circle cx="5.1" cy="14.3" r="1.5" fill="none" stroke="#fff" stroke-width="0.9"/><path d="M8.9 16 V14.2 Q8.9 12.8 10.3 12.8 Q11.7 12.8 11.7 14.2 V16" fill="none" stroke="#fff" stroke-width="0.9"/></svg>
<div class="t" style="left:1018.84px;top:595px;font-size:14px;color:#3f4a69;letter-spacing:-0.350px;transform:scaleX(0.9428);">Mo, 12. Dezember</div>
<div class="t" style="left:1019.20px;top:613px;font-size:14px;color:#3f4a69;letter-spacing:-0.166px;">2022</div>
<div class="t" style="left:1018.80px;top:631px;font-size:14px;color:#3f4a69;letter-spacing:-0.350px;transform:scaleX(0.9808);">FD 07:00 - 16:00</div>
<div class="t" style="left:1276.85px;top:577px;font-size:14px;color:#3f4a69;letter-spacing:-0.350px;transform:scaleX(0.9386);">Mi, 9. März</div>
<div class="t" style="left:1277.24px;top:595px;font-size:14px;color:#3f4a69;letter-spacing:-0.350px;transform:scaleX(0.9386);">2022 16:32</div>
<div class="t" style="left:1276.88px;top:613px;font-size:14px;color:#3f4a69;letter-spacing:-0.350px;transform:scaleX(0.9720);">Uhr</div>
<div class="abs" style="left:1272.00px;top:634.00px;width:64.40px;height:15.50px;background:#d6d6d6;"></div>
<div class="abs" style="left:1272.00px;top:651.50px;width:64.40px;height:15.50px;background:#d6d6d6;"></div>
<div class="abs" style="left:1391.00px;top:603.00px;width:41.00px;height:41.00px;background:#e3eaf5;border-radius:5.5px;"></div>
<div class="abs" style="left:1436.00px;top:603.00px;width:41.00px;height:41.00px;background:#e3eaf5;border-radius:5.5px;"></div>
<div class="abs" style="left:1480.50px;top:603.00px;width:41.00px;height:41.00px;background:#e3eaf5;border-radius:5.5px;"></div>
<div class="abs" style="left:1525.00px;top:603.00px;width:41.00px;height:41.00px;background:#f5f8fb;border-radius:5.5px;"></div>
<div class="abs" style="left:1569.50px;top:603.00px;width:41.00px;height:41.00px;background:#f5f8fb;border-radius:5.5px;"></div>
<div class="abs" style="left:1614.30px;top:603.00px;width:41.00px;height:41.00px;background:#f5f8fb;border-radius:5.5px;"></div>
<svg class="abs" style="left:1391.00px;top:603.00px;" width="41.00" height="41.00" viewBox="0 0 41 41" preserveAspectRatio="none"><path d="M11.8 17.4 Q11.8 15.6 13.6 15.6 H20.4 V26 H22 V27.1 Q22 28.9 20.2 28.9 H13.6 Q11.8 28.9 11.8 27.1 Z" fill="#14264f"/><path d="M20.1 12.6 Q20.1 11 21.7 11 H26.6 L29.9 14.3 V23.1 Q29.9 24.7 28.3 24.7 H21.7 Q20.1 24.7 20.1 23.1 Z" fill="#929eb9"/><path d="M26.8 11.2 L29.7 14.1 H26.8 Z" fill="#14264f"/></svg>
<svg class="abs" style="left:1436.00px;top:603.00px;" width="41.00" height="41.00" viewBox="0 0 41 41" preserveAspectRatio="none"><path d="M19.6 14.3 H14.9 Q12.3 14.3 12.3 16.9 V25.2 Q12.3 27.8 14.9 27.8 H23.2 Q25.8 27.8 25.8 25.2 V21" fill="none" stroke="#929eb9" stroke-width="2.2" stroke-linecap="round"/><path d="M16 24.7 L17.2 20.9 L24.2 13.9 L27.2 16.9 L20.2 23.9 Z" fill="#14264f"/><path d="M24.9 13.2 L25.7 12.4 Q26.6 11.5 27.6 12.4 L28.7 13.5 Q29.6 14.5 28.7 15.4 L27.9 16.2 Z" fill="#14264f"/></svg>
<svg class="abs" style="left:1480.50px;top:603.00px;" width="41.00" height="41.00" viewBox="0 0 41 41" preserveAspectRatio="none"><circle cx="16.9" cy="15.6" r="4.6" fill="#929eb9"/><path d="M9 28.9 V27.2 Q9 21.9 14.4 21.9 H19.4 Q24.8 21.9 24.8 27.2 V28.9 Z" fill="#929eb9"/><path d="M25 18.3 L27.2 20.6 L31 16.2" fill="none" stroke="#14264f" stroke-width="1.9" stroke-linecap="round" stroke-linejoin="round"/></svg>
<svg class="abs" style="left:1525.00px;top:603.00px;" width="41.00" height="41.00" viewBox="0 0 41 41" preserveAspectRatio="none"><path d="M14.8 14.4 L26 25.6" stroke="#d5d9e2" stroke-width="1.9"/><circle cx="20.4" cy="20" r="7.95" fill="none" stroke="#b2b7c5" stroke-width="1.9"/></svg>
<svg class="abs" style="left:1569.50px;top:603.00px;" width="41.00" height="41.00" viewBox="0 0 41 41" preserveAspectRatio="none"><rect x="9.1" y="14.9" width="22.6" height="14" rx="1.6" fill="#dcdfe7"/><rect x="9.6" y="18" width="3.6" height="1.1" fill="#b4b9c8"/><rect x="9.6" y="21.4" width="3.6" height="1.1" fill="#b4b9c8"/><rect x="27.6" y="18" width="3.6" height="1.1" fill="#b4b9c8"/><rect x="27.6" y="21.4" width="3.6" height="1.1" fill="#b4b9c8"/><path d="M14.8 12.7 Q14.8 11.2 16.3 11.2 H24.8 Q26.3 11.2 26.3 12.7 V28.9 H22.4 V26.2 Q22.4 24.6 20.55 24.6 Q18.7 24.6 18.7 26.2 V28.9 H14.8 Z" fill="#b4b9c8"/><path d="M19.8 14 H21.3 V15.4 H22.7 V16.9 H21.3 V18.3 H19.8 V16.9 H18.4 V15.4 H19.8 Z" fill="#f5f8fb"/><path d="M18.7 29.2 V26.2 Q18.7 24.6 20.55 24.6 Q22.4 24.6 22.4 26.2 V29.2 Z" fill="#f5f8fb"/></svg>
<svg class="abs" style="left:1614.30px;top:603.00px;" width="41.00" height="41.00" viewBox="0 0 41 41" preserveAspectRatio="none"><path d="M12.2 12.9 Q12.2 12.3 12.9 12.3 H17 L17.6 11.5 Q17.8 11.2 18.2 11.2 H21.9 Q22.3 11.2 22.5 11.5 L23.1 12.3 H27.2 Q27.9 12.3 27.9 12.9 V13.6 Q27.9 14.1 27.3 14.1 H12.8 Q12.2 14.1 12.2 13.6 Z" fill="#b4b9c8"/><path d="M13.5 14.6 H26.6 L25.9 27.4 Q25.8 28.9 24.3 28.9 H15.8 Q14.3 28.9 14.2 27.4 Z" fill="#dcdfe7"/></svg>
<div class="abs" style="left:31.75px;top:682.60px;width:1736.75px;height:1.20px;background:#e8ecf2;"></div>
<div class="t" style="left:41.36px;top:725px;font-size:14px;color:#3f4a69;letter-spacing:-0.350px;transform:scaleX(0.9315);">DA-31687</div>
<div class="abs" style="left:187.60px;top:724.40px;width:64.70px;height:20.00px;background:#fa6676;border-radius:4.5px;"></div>
<div class="t" style="left:198.31px;top:726px;font-size:10.4px;color:#fff;letter-spacing:0.466px;-webkit-text-stroke:0.45px #fff;">Storniert</div>
<div class="t" style="left:341.39px;top:725px;font-size:14px;color:#1e2a4c;transform:scaleX(1.0309);-webkit-text-stroke:0.25px #1e2a4c;">0</div>
<div class="t" style="left:399.92px;top:725px;font-size:14px;color:#dc6a74;transform:scaleX(1.0633);-webkit-text-stroke:0.1px #dc6a74;">0</div>
<div class="t" style="left:474.92px;top:725px;font-size:14px;color:#62ae55;transform:scaleX(1.0633);-webkit-text-stroke:0.1px #62ae55;">0</div>
<div class="t" style="left:549.95px;top:725px;font-size:14px;color:#62ae55;letter-spacing:0.279px;-webkit-text-stroke:0.1px #62ae55;">0 / 2</div>
<div class="abs" style="left:617.00px;top:698.75px;width:146.20px;height:15.25px;background:#d6d6d6;"></div>
<div class="abs" style="left:617.00px;top:717.00px;width:146.20px;height:15.50px;background:#d6d6d6;"></div>
<div class="abs" style="left:617.00px;top:736.25px;width:146.20px;height:15.50px;background:#d6d6d6;"></div>
<div class="abs" style="left:617.00px;top:754.50px;width:146.20px;height:15.50px;background:#d6d6d6;"></div>
<svg class="abs" style="left:847.00px;top:725.00px;" width="15.50" height="17.50" viewBox="0 0 15.5 17.5" preserveAspectRatio="none"><circle cx="7.75" cy="4.1" r="3.95" fill="#cdd1da"/><path d="M0 17.2 V15.6 Q0.3 11.4 4.4 9.9 H11.1 Q15.2 11.4 15.5 15.6 V17.2 Z" fill="#989fb2"/><circle cx="5.1" cy="14.3" r="1.5" fill="none" stroke="#fff" stroke-width="0.9"/><path d="M8.9 16 V14.2 Q8.9 12.8 10.3 12.8 Q11.7 12.8 11.7 14.2 V16" fill="none" stroke="#fff" stroke-width="0.9"/></svg>
<div class="t" style="left:1018.81px;top:706px;font-size:14px;color:#3f4a69;letter-spacing:-0.350px;transform:scaleX(0.9749);">Do, 29. Oktober</div>
<div class="t" style="left:1019.41px;top:724px;font-size:14px;color:#3f4a69;letter-spacing:0.217px;">0020</div>
<div class="t" style="left:1018.80px;top:742px;font-size:14px;color:#3f4a69;letter-spacing:-0.350px;transform:scaleX(0.9833);">FD 07:00 - 16:00</div>
<div class="t" style="left:1276.86px;top:697px;font-size:14px;color:#3f4a69;letter-spacing:-0.350px;transform:scaleX(0.9249);">Di, 31. August</div>
<div class="t" style="left:1277.25px;top:715px;font-size:14px;color:#3f4a69;letter-spacing:-0.350px;transform:scaleX(0.9255);">2021 16:38 Uhr</div>
<div class="abs" style="left:1272.00px;top:736.00px;width:64.40px;height:15.50px;background:#d6d6d6;"></div>
<div class="abs" style="left:1272.00px;top:754.50px;width:64.40px;height:15.25px;background:#d6d6d6;"></div>
<div class="abs" style="left:1391.00px;top:714.00px;width:41.00px;height:41.00px;background:#e3eaf5;border-radius:5.5px;"></div>
<div class="abs" style="left:1436.00px;top:714.00px;width:41.00px;height:41.00px;background:#e3eaf5;border-radius:5.5px;"></div>
<div class="abs" style="left:1480.50px;top:714.00px;width:41.00px;height:41.00px;background:#e3eaf5;border-radius:5.5px;"></div>
<div class="abs" style="left:1525.00px;top:714.00px;width:41.00px;height:41.00px;background:#f5f8fb;border-radius:5.5px;"></div>
<div class="abs" style="left:1569.50px;top:714.00px;width:41.00px;height:41.00px;background:#f5f8fb;border-radius:5.5px;"></div>
<div class="abs" style="left:1614.30px;top:714.00px;width:41.00px;height:41.00px;background:#f5f8fb;border-radius:5.5px;"></div>
<svg class="abs" style="left:1391.00px;top:714.00px;" width="41.00" height="41.00" viewBox="0 0 41 41" preserveAspectRatio="none"><path d="M11.8 17.4 Q11.8 15.6 13.6 15.6 H20.4 V26 H22 V27.1 Q22 28.9 20.2 28.9 H13.6 Q11.8 28.9 11.8 27.1 Z" fill="#14264f"/><path d="M20.1 12.6 Q20.1 11 21.7 11 H26.6 L29.9 14.3 V23.1 Q29.9 24.7 28.3 24.7 H21.7 Q20.1 24.7 20.1 23.1 Z" fill="#929eb9"/><path d="M26.8 11.2 L29.7 14.1 H26.8 Z" fill="#14264f"/></svg>
<svg class="abs" style="left:1436.00px;top:714.00px;" width="41.00" height="41.00" viewBox="0 0 41 41" preserveAspectRatio="none"><path d="M19.6 14.3 H14.9 Q12.3 14.3 12.3 16.9 V25.2 Q12.3 27.8 14.9 27.8 H23.2 Q25.8 27.8 25.8 25.2 V21" fill="none" stroke="#929eb9" stroke-width="2.2" stroke-linecap="round"/><path d="M16 24.7 L17.2 20.9 L24.2 13.9 L27.2 16.9 L20.2 23.9 Z" fill="#14264f"/><path d="M24.9 13.2 L25.7 12.4 Q26.6 11.5 27.6 12.4 L28.7 13.5 Q29.6 14.5 28.7 15.4 L27.9 16.2 Z" fill="#14264f"/></svg>
<svg class="abs" style="left:1480.50px;top:714.00px;" width="41.00" height="41.00" viewBox="0 0 41 41" preserveAspectRatio="none"><circle cx="16.9" cy="15.6" r="4.6" fill="#929eb9"/><path d="M9 28.9 V27.2 Q9 21.9 14.4 21.9 H19.4 Q24.8 21.9 24.8 27.2 V28.9 Z" fill="#929eb9"/><path d="M25 18.3 L27.2 20.6 L31 16.2" fill="none" stroke="#14264f" stroke-width="1.9" stroke-linecap="round" stroke-linejoin="round"/></svg>
<svg class="abs" style="left:1525.00px;top:714.00px;" width="41.00" height="41.00" viewBox="0 0 41 41" preserveAspectRatio="none"><path d="M14.8 14.4 L26 25.6" stroke="#d5d9e2" stroke-width="1.9"/><circle cx="20.4" cy="20" r="7.95" fill="none" stroke="#b2b7c5" stroke-width="1.9"/></svg>
<svg class="abs" style="left:1569.50px;top:714.00px;" width="41.00" height="41.00" viewBox="0 0 41 41" preserveAspectRatio="none"><rect x="9.1" y="14.9" width="22.6" height="14" rx="1.6" fill="#dcdfe7"/><rect x="9.6" y="18" width="3.6" height="1.1" fill="#b4b9c8"/><rect x="9.6" y="21.4" width="3.6" height="1.1" fill="#b4b9c8"/><rect x="27.6" y="18" width="3.6" height="1.1" fill="#b4b9c8"/><rect x="27.6" y="21.4" width="3.6" height="1.1" fill="#b4b9c8"/><path d="M14.8 12.7 Q14.8 11.2 16.3 11.2 H24.8 Q26.3 11.2 26.3 12.7 V28.9 H22.4 V26.2 Q22.4 24.6 20.55 24.6 Q18.7 24.6 18.7 26.2 V28.9 H14.8 Z" fill="#b4b9c8"/><path d="M19.8 14 H21.3 V15.4 H22.7 V16.9 H21.3 V18.3 H19.8 V16.9 H18.4 V15.4 H19.8 Z" fill="#f5f8fb"/><path d="M18.7 29.2 V26.2 Q18.7 24.6 20.55 24.6 Q22.4 24.6 22.4 26.2 V29.2 Z" fill="#f5f8fb"/></svg>
<svg class="abs" style="left:1614.30px;top:714.00px;" width="41.00" height="41.00" viewBox="0 0 41 41" preserveAspectRatio="none"><path d="M12.2 12.9 Q12.2 12.3 12.9 12.3 H17 L17.6 11.5 Q17.8 11.2 18.2 11.2 H21.9 Q22.3 11.2 22.5 11.5 L23.1 12.3 H27.2 Q27.9 12.3 27.9 12.9 V13.6 Q27.9 14.1 27.3 14.1 H12.8 Q12.2 14.1 12.2 13.6 Z" fill="#b4b9c8"/><path d="M13.5 14.6 H26.6 L25.9 27.4 Q25.8 28.9 24.3 28.9 H15.8 Q14.3 28.9 14.2 27.4 Z" fill="#dcdfe7"/></svg>
<div class="abs" style="left:31.75px;top:784.60px;width:1736.75px;height:1.20px;background:#e8ecf2;"></div>
<div class="t" style="left:41.35px;top:827px;font-size:14px;color:#3f4a69;letter-spacing:-0.350px;transform:scaleX(0.9400);">DA-23159</div>
<div class="abs" style="left:187.60px;top:826.40px;width:64.70px;height:20.00px;background:#fa6676;border-radius:4.5px;"></div>
<div class="t" style="left:198.31px;top:828px;font-size:10.4px;color:#fff;letter-spacing:0.466px;-webkit-text-stroke:0.45px #fff;">Storniert</div>
<div class="t" style="left:341.39px;top:827px;font-size:14px;color:#1e2a4c;transform:scaleX(1.0309);-webkit-text-stroke:0.25px #1e2a4c;">0</div>
<div class="t" style="left:399.66px;top:827px;font-size:14px;color:#dc6a74;transform:scaleX(1.1091);-webkit-text-stroke:0.1px #dc6a74;">6</div>
<div class="t" style="left:474.92px;top:827px;font-size:14px;color:#62ae55;transform:scaleX(1.0633);-webkit-text-stroke:0.1px #62ae55;">0</div>
<div class="t" style="left:549.95px;top:827px;font-size:14px;color:#62ae55;letter-spacing:-0.346px;-webkit-text-stroke:0.1px #62ae55;">0 / 1</div>
<div class="abs" style="left:617.00px;top:800.25px;width:146.20px;height:15.50px;background:#d6d6d6;"></div>
<div class="abs" style="left:617.00px;top:818.25px;width:146.20px;height:15.75px;background:#d6d6d6;"></div>
<div class="abs" style="left:617.00px;top:837.75px;width:146.20px;height:15.25px;background:#d6d6d6;"></div>
<div class="abs" style="left:617.00px;top:855.75px;width:146.20px;height:15.25px;background:#d6d6d6;"></div>
<svg class="abs" style="left:847.00px;top:827.00px;" width="15.50" height="17.50" viewBox="0 0 15.5 17.5" preserveAspectRatio="none"><circle cx="7.75" cy="4.1" r="3.95" fill="#cdd1da"/><path d="M0 17.2 V15.6 Q0.3 11.4 4.4 9.9 H11.1 Q15.2 11.4 15.5 15.6 V17.2 Z" fill="#989fb2"/><circle cx="5.1" cy="14.3" r="1.5" fill="none" stroke="#fff" stroke-width="0.9"/><path d="M8.9 16 V14.2 Q8.9 12.8 10.3 12.8 Q11.7 12.8 11.7 14.2 V16" fill="none" stroke="#fff" stroke-width="0.9"/></svg>
<div class="t" style="left:1018.78px;top:817px;font-size:14px;color:#3f4a69;letter-spacing:-0.350px;">Fr, 30. Juli 0202</div>
<div class="t" style="left:1019.30px;top:835px;font-size:14px;color:#3f4a69;letter-spacing:-0.350px;transform:scaleX(0.9556);">SD 14:30 - 23:00</div>
<div class="t" style="left:1276.86px;top:798px;font-size:14px;color:#3f4a69;letter-spacing:-0.350px;transform:scaleX(0.9287);">Di, 15. Juni</div>
<div class="t" style="left:1277.28px;top:817px;font-size:14px;color:#3f4a69;letter-spacing:-0.350px;transform:scaleX(0.8898);">2021 13:21 Uhr</div>
<div class="abs" style="left:1271.25px;top:837.50px;width:64.75px;height:15.00px;background:#d6d6d6;"></div>
<div class="abs" style="left:1271.25px;top:855.50px;width:64.75px;height:15.25px;background:#d6d6d6;"></div>
<div class="abs" style="left:1391.00px;top:816.00px;width:41.00px;height:41.00px;background:#e3eaf5;border-radius:5.5px;"></div>
<div class="abs" style="left:1436.00px;top:816.00px;width:41.00px;height:41.00px;background:#e3eaf5;border-radius:5.5px;"></div>
<div class="abs" style="left:1480.50px;top:816.00px;width:41.00px;height:41.00px;background:#e3eaf5;border-radius:5.5px;"></div>
<div class="abs" style="left:1525.00px;top:816.00px;width:41.00px;height:41.00px;background:#f5f8fb;border-radius:5.5px;"></div>
<div class="abs" style="left:1569.50px;top:816.00px;width:41.00px;height:41.00px;background:#f5f8fb;border-radius:5.5px;"></div>
<div class="abs" style="left:1614.30px;top:816.00px;width:41.00px;height:41.00px;background:#f5f8fb;border-radius:5.5px;"></div>
<svg class="abs" style="left:1391.00px;top:816.00px;" width="41.00" height="41.00" viewBox="0 0 41 41" preserveAspectRatio="none"><path d="M11.8 17.4 Q11.8 15.6 13.6 15.6 H20.4 V26 H22 V27.1 Q22 28.9 20.2 28.9 H13.6 Q11.8 28.9 11.8 27.1 Z" fill="#14264f"/><path d="M20.1 12.6 Q20.1 11 21.7 11 H26.6 L29.9 14.3 V23.1 Q29.9 24.7 28.3 24.7 H21.7 Q20.1 24.7 20.1 23.1 Z" fill="#929eb9"/><path d="M26.8 11.2 L29.7 14.1 H26.8 Z" fill="#14264f"/></svg>
<svg class="abs" style="left:1436.00px;top:816.00px;" width="41.00" height="41.00" viewBox="0 0 41 41" preserveAspectRatio="none"><path d="M19.6 14.3 H14.9 Q12.3 14.3 12.3 16.9 V25.2 Q12.3 27.8 14.9 27.8 H23.2 Q25.8 27.8 25.8 25.2 V21" fill="none" stroke="#929eb9" stroke-width="2.2" stroke-linecap="round"/><path d="M16 24.7 L17.2 20.9 L24.2 13.9 L27.2 16.9 L20.2 23.9 Z" fill="#14264f"/><path d="M24.9 13.2 L25.7 12.4 Q26.6 11.5 27.6 12.4 L28.7 13.5 Q29.6 14.5 28.7 15.4 L27.9 16.2 Z" fill="#14264f"/></svg>
<svg class="abs" style="left:1480.50px;top:816.00px;" width="41.00" height="41.00" viewBox="0 0 41 41" preserveAspectRatio="none"><circle cx="16.9" cy="15.6" r="4.6" fill="#929eb9"/><path d="M9 28.9 V27.2 Q9 21.9 14.4 21.9 H19.4 Q24.8 21.9 24.8 27.2 V28.9 Z" fill="#929eb9"/><path d="M25 18.3 L27.2 20.6 L31 16.2" fill="none" stroke="#14264f" stroke-width="1.9" stroke-linecap="round" stroke-linejoin="round"/></svg>
<svg class="abs" style="left:1525.00px;top:816.00px;" width="41.00" height="41.00" viewBox="0 0 41 41" preserveAspectRatio="none"><path d="M14.8 14.4 L26 25.6" stroke="#d5d9e2" stroke-width="1.9"/><circle cx="20.4" cy="20" r="7.95" fill="none" stroke="#b2b7c5" stroke-width="1.9"/></svg>
<svg class="abs" style="left:1569.50px;top:816.00px;" width="41.00" height="41.00" viewBox="0 0 41 41" preserveAspectRatio="none"><rect x="9.1" y="14.9" width="22.6" height="14" rx="1.6" fill="#dcdfe7"/><rect x="9.6" y="18" width="3.6" height="1.1" fill="#b4b9c8"/><rect x="9.6" y="21.4" width="3.6" height="1.1" fill="#b4b9c8"/><rect x="27.6" y="18" width="3.6" height="1.1" fill="#b4b9c8"/><rect x="27.6" y="21.4" width="3.6" height="1.1" fill="#b4b9c8"/><path d="M14.8 12.7 Q14.8 11.2 16.3 11.2 H24.8 Q26.3 11.2 26.3 12.7 V28.9 H22.4 V26.2 Q22.4 24.6 20.55 24.6 Q18.7 24.6 18.7 26.2 V28.9 H14.8 Z" fill="#b4b9c8"/><path d="M19.8 14 H21.3 V15.4 H22.7 V16.9 H21.3 V18.3 H19.8 V16.9 H18.4 V15.4 H19.8 Z" fill="#f5f8fb"/><path d="M18.7 29.2 V26.2 Q18.7 24.6 20.55 24.6 Q22.4 24.6 22.4 26.2 V29.2 Z" fill="#f5f8fb"/></svg>
<svg class="abs" style="left:1614.30px;top:816.00px;" width="41.00" height="41.00" viewBox="0 0 41 41" preserveAspectRatio="none"><path d="M12.2 12.9 Q12.2 12.3 12.9 12.3 H17 L17.6 11.5 Q17.8 11.2 18.2 11.2 H21.9 Q22.3 11.2 22.5 11.5 L23.1 12.3 H27.2 Q27.9 12.3 27.9 12.9 V13.6 Q27.9 14.1 27.3 14.1 H12.8 Q12.2 14.1 12.2 13.6 Z" fill="#b4b9c8"/><path d="M13.5 14.6 H26.6 L25.9 27.4 Q25.8 28.9 24.3 28.9 H15.8 Q14.3 28.9 14.2 27.4 Z" fill="#dcdfe7"/></svg>
<div class="abs" style="left:31.75px;top:886.20px;width:1736.75px;height:1.20px;background:#e8ecf2;"></div>
<div class="t" style="left:622.84px;top:928px;font-size:14px;color:#3f4a69;letter-spacing:-0.350px;transform:scaleX(0.9438);">Hirslanden Klinik Linde</div>
<div class="t" style="left:1276.80px;top:900px;font-size:14px;color:#3f4a69;letter-spacing:-0.350px;transform:scaleX(0.9796);">Mi, 30.</div>
<div class="t" style="left:1276.80px;top:919px;font-size:14px;color:#3f4a69;letter-spacing:-0.350px;transform:scaleX(0.9790);">Dezember</div>
</main>
</body>
</html>
